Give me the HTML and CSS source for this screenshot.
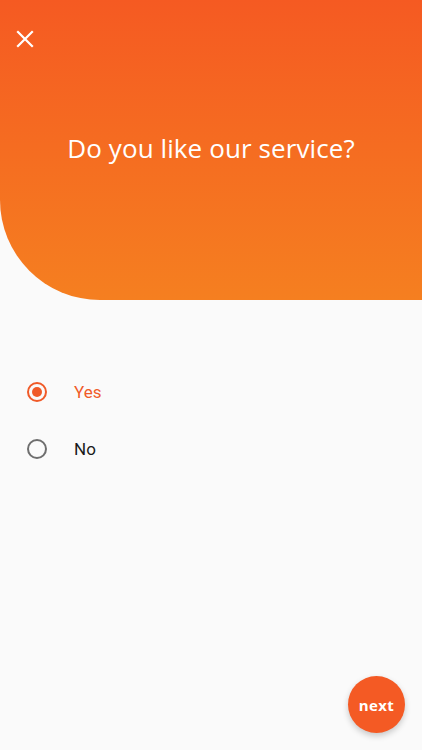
FILE: index.html
```html
<!DOCTYPE html>
<html>
<head>
<meta charset="utf-8">
<link rel="stylesheet" href="styles.css">
</head>
<body>
<div class="screen">
  <header class="hero">
    <button class="close" aria-label="close">
      <svg width="18" height="18" viewBox="0 0 18 18"><path d="M2 2L16 16M16 2L2 16" stroke="#fff" stroke-width="2.2" stroke-linecap="square"/></svg>
    </button>
    <h1 class="title">Do you like our service?</h1>
  </header>
  <div class="options">
    <label class="option selected">
      <span class="radio"><span class="dot"></span></span>
      <span class="label">Yes</span>
    </label>
    <label class="option">
      <span class="radio"></span>
      <span class="label">No</span>
    </label>
  </div>
  <button class="fab">next</button>
</div>
</body>
</html>
```
FILE: styles.css
```css
* { box-sizing: border-box; }
html, body { margin: 0; padding: 0; }
body {
  background: #fafafa;
  font-family: "Open Sans", "Noto Sans", sans-serif;
  width: 422px;
  height: 750px;
  overflow: hidden;
}
.screen {
  position: relative;
  width: 422px;
  height: 750px;
  display: flex;
  flex-direction: column;
}
.hero {
  height: 300px;
  background: linear-gradient(180deg, #f55a22 0%, #f57f20 100%);
  border-bottom-left-radius: 100px;
  display: flex;
  flex-direction: column;
  padding: 30px 0 0 16px;
}
.close {
  background: none;
  border: 0;
  padding: 0;
  width: 18px;
  height: 18px;
  display: flex;
  cursor: pointer;
}
.title {
  margin: 82px 0 0 -16px;
  text-align: center;
  color: #fff;
  font-family: "Open Sans", sans-serif;
  font-weight: 400;
  font-size: 26px;
  letter-spacing: 0.1px;
}
.options {
  display: flex;
  flex-direction: column;
  padding: 82px 0 0 27px;
  gap: 37px;
}
.option {
  display: flex;
  align-items: center;
  gap: 27px;
  height: 20px;
}
.radio {
  width: 20px;
  height: 20px;
  border-radius: 50%;
  border: 2px solid #6e6e6e;
  display: flex;
  align-items: center;
  justify-content: center;
}
.option.selected .radio { border-color: #f05a28; }
.dot {
  width: 10px;
  height: 10px;
  border-radius: 50%;
  background: #f05a28;
}
.label {
  font-family: "Roboto", sans-serif;
  font-size: 17px;
  color: #1a1a1a;
}
.option.selected .label { color: #f05a28; }
.fab {
  position: absolute;
  left: 348px;
  top: 676px;
  width: 57px;
  height: 57px;
  border-radius: 50%;
  border: 0;
  background: #f45a24;
  color: #fff;
  font-family: "Open Sans", sans-serif;
  font-weight: 700;
  font-size: 15px;
  letter-spacing: 0.4px;
  box-shadow: 0 3px 6px rgba(0,0,0,0.2);
}
```
